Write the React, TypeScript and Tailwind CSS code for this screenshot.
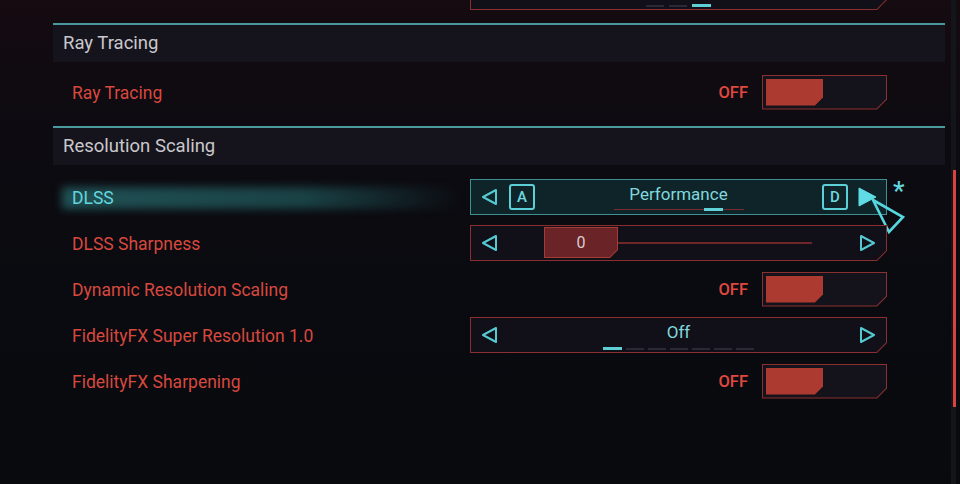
import React from "react";

const CH10 = "[clip-path:polygon(0_0,100%_0,100%_calc(100%_-_10px),calc(100%_-_10px)_100%,0_100%)]";
const CH9 = "[clip-path:polygon(0_0,100%_0,100%_calc(100%_-_9.4px),calc(100%_-_9.4px)_100%,0_100%)]";
const CH8 = "[clip-path:polygon(0_0,100%_0,100%_calc(100%_-_8px),calc(100%_-_8px)_100%,0_100%)]";
const CH7 = "[clip-path:polygon(0_0,100%_0,100%_calc(100%_-_7.4px),calc(100%_-_7.4px)_100%,0_100%)]";

function Arrow({ dir, filled = false }: { dir: "left" | "right"; filled?: boolean }) {
  const pts = dir === "left" ? "15,2 2,9 15,16" : "2,2 15,9 2,16";
  return (
    <svg width="17" height="18" viewBox="0 0 17 18" className="shrink-0">
      <polygon
        points={pts}
        fill={filled ? "#5fdce6" : "none"}
        stroke="#55c9d2"
        strokeWidth="2"
        strokeLinejoin="round"
      />
    </svg>
  );
}

function Toggle() {
  return (
    <div className="flex items-center">
      <span className="mr-[14px] mt-[2px] text-[16.5px] font-medium leading-none text-[#e0483f]">OFF</span>
      <div className={`h-[35px] w-[125px] bg-[#8a3031] p-px ${CH10}`}>
        <div className={`h-full w-full bg-[#14131b] p-[3px] ${CH9}`}>
          <div className={`h-full w-[57px] bg-[#ad3a31] ${CH8}`} />
        </div>
      </div>
    </div>
  );
}

function RedBox({ children }: { children: React.ReactNode }) {
  return (
    <div className={`h-[36px] w-[417px] bg-[#8a2f31] p-px ${CH10}`}>
      <div className={`flex h-full w-full items-start bg-[#110f17] ${CH9}`}>{children}</div>
    </div>
  );
}

function Ticks({ count, active, gap }: { count: number; active: number; gap: string }) {
  return (
    <div className={`flex items-center ${gap}`}>
      {Array.from({ length: count }).map((_, i) =>
        i === active ? (
          <div key={i} className="h-[3px] w-[19px] bg-[#5fcfd6]" />
        ) : (
          <div key={i} className="h-[2px] w-[18px] bg-[#2a2a36]" />
        )
      )}
    </div>
  );
}

function Row({ label, color = "red", children }: { label: string; color?: "red" | "cyan"; children: React.ReactNode }) {
  return (
    <div className="flex h-[36px] items-center pl-[19px] pr-[58px]">
      <div className="relative flex h-full flex-1 items-center">
        {color === "cyan" && (
          <span className="absolute left-[-10px] top-[8px] h-[22px] w-[400px] bg-[linear-gradient(90deg,rgba(46,128,130,0.6)_0%,rgba(38,112,114,0.55)_60%,rgba(30,90,92,0)_100%)] blur-[4px]" />
        )}
        <span
          className={`relative mt-[3px] text-[17.5px] leading-none ${
            color === "cyan" ? "text-[#62d6de]" : "text-[#d8483e]"
          }`}
        >
          {label}
        </span>
      </div>
      {children}
    </div>
  );
}

function Header({ title }: { title: string }) {
  return (
    <div className="flex h-[37px] items-center bg-[#15141c] pl-[10px]">
      <span className="text-[18.5px] leading-none text-[#cac8cc]">{title}</span>
    </div>
  );
}

export default function App() {
  return (
    <div
      className="relative flex h-[484px] w-[960px] overflow-hidden bg-[linear-gradient(180deg,#150b11_0%,#0d0b11_25%,#0a0b10_60%,#080a0e_100%)]"
      style={{ fontFamily: "Roboto, 'Liberation Sans', sans-serif" }}
    >
      <div className="w-[53px] shrink-0" />
      <div className="mt-[-26px] flex w-[892px] shrink-0 flex-col">
        {/* partially visible previous row (scrolled off the top) */}
        <div className="flex h-[36px] items-center pl-[19px] pr-[58px]">
          <div className="flex-1" />
          <RedBox>
            <div className="flex h-full w-full items-center px-[10px]">
              <Arrow dir="left" />
              <div className="flex flex-1 flex-col items-center self-start pt-[5px]">
                <div className="h-[20px]" />
                <div className="mt-[4px]">
                  <Ticks count={3} active={2} gap="gap-[5px]" />
                </div>
              </div>
              <Arrow dir="right" />
            </div>
          </RedBox>
        </div>

        {/* Ray Tracing section */}
        <div className="mt-[13px] border-t-2 border-[#4a9a9d]">
          <Header title="Ray Tracing" />
          <div className="pb-[16px] pt-[12px]">
            <Row label="Ray Tracing">
              <Toggle />
            </Row>
          </div>
        </div>

        {/* Resolution Scaling section */}
        <div className="border-t-2 border-[#4a9a9d]">
          <Header title="Resolution Scaling" />
          <div className="flex flex-col gap-[10px] pt-[14px]">
            <Row label="DLSS" color="cyan">
              <div className="relative h-[36px] w-[417px] border border-[#3f9093] bg-[#0e2429]">
                <div className="flex h-full w-full items-center pl-[10px] pr-[9px]">
                  <Arrow dir="left" />
                  <div className="ml-[11px] flex h-[26px] w-[26px] items-center justify-center rounded-[3px] border-2 border-[#5ccfd7] text-[15px] font-medium leading-none text-[#6fd8e0]">
                    A
                  </div>
                  <div className="flex flex-1 flex-col items-center self-start pt-[4px]">
                    <span className="h-[20px] text-[17px] leading-[20px] text-[#80d8de]">Performance</span>
                    <div className="mt-[4px] flex h-[3px] items-center">
                      <div className="h-px w-[90px] bg-[#7a2c33]" />
                      <div className="h-[3px] w-[19px] bg-[#62d2d9]" />
                      <div className="h-px w-[21px] bg-[#7a2c33]" />
                    </div>
                  </div>
                  <div className="flex h-[26px] w-[26px] items-center justify-center rounded-[3px] border-2 border-[#5ccfd7] text-[15px] font-medium leading-none text-[#6fd8e0]">
                    D
                  </div>
                  <div className="ml-[10px]">
                    <svg width="19" height="20" viewBox="0 0 19 20" className="shrink-0">
                      <polygon points="1,1 18,10 1,19" fill="#5fdce6" stroke="#5fdce6" strokeWidth="1" strokeLinejoin="round" />
                    </svg>
                  </div>
                </div>
                {/* mouse cursor */}
                <svg
                  width="46"
                  height="46"
                  viewBox="0 0 46 46"
                  className="absolute left-[395px] top-[14px]"
                >
                  <polygon
                    points="7,6 37,23 23,38"
                    fill="none"
                    stroke="#56d6df"
                    strokeWidth="2.6"
                    strokeLinejoin="miter"
                  />
                </svg>
                <span className="absolute left-[422px] top-[-2px] text-[26px] font-medium leading-none text-[#62d6de]">
                  *
                </span>
              </div>
            </Row>

            <Row label="DLSS Sharpness">
              <RedBox>
                <div className="flex h-full w-full items-center pl-[10px]">
                  <Arrow dir="left" />
                  <div className="ml-[46px] self-start pt-px">
                    <div className={`h-[31px] w-[74px] bg-[#a83a34] p-px ${CH8}`}>
                      <div className={`flex h-full w-full items-center justify-center bg-[#6a2326] ${CH7}`}>
                        <span className="text-[16px] leading-none text-[#d9cccd]">0</span>
                      </div>
                    </div>
                  </div>
                  <div className="h-[2px] w-[194px] bg-[#6f2629]" />
                  <div className="ml-[47px]">
                    <Arrow dir="right" />
                  </div>
                </div>
              </RedBox>
            </Row>

            <Row label="Dynamic Resolution Scaling">
              <Toggle />
            </Row>

            <Row label="FidelityFX Super Resolution 1.0">
              <RedBox>
                <div className="flex h-full w-full items-center px-[10px]">
                  <Arrow dir="left" />
                  <div className="flex flex-1 flex-col items-center self-start pt-[4px]">
                    <span className="h-[20px] text-[17px] leading-[20px] text-[#80d8de]">Off</span>
                    <div className="mt-[5px]">
                      <Ticks count={7} active={0} gap="gap-[4px]" />
                    </div>
                  </div>
                  <Arrow dir="right" />
                </div>
              </RedBox>
            </Row>

            <Row label="FidelityFX Sharpening">
              <Toggle />
            </Row>
          </div>
        </div>
      </div>
      <div className="w-[6px] shrink-0" />
      <div className="flex h-full w-[5px] shrink-0 flex-col items-end bg-[#14141b] pt-[170px]">
        <div className="h-[237px] w-[3px] bg-[#d8433d]" />
      </div>
    </div>
  );
}
